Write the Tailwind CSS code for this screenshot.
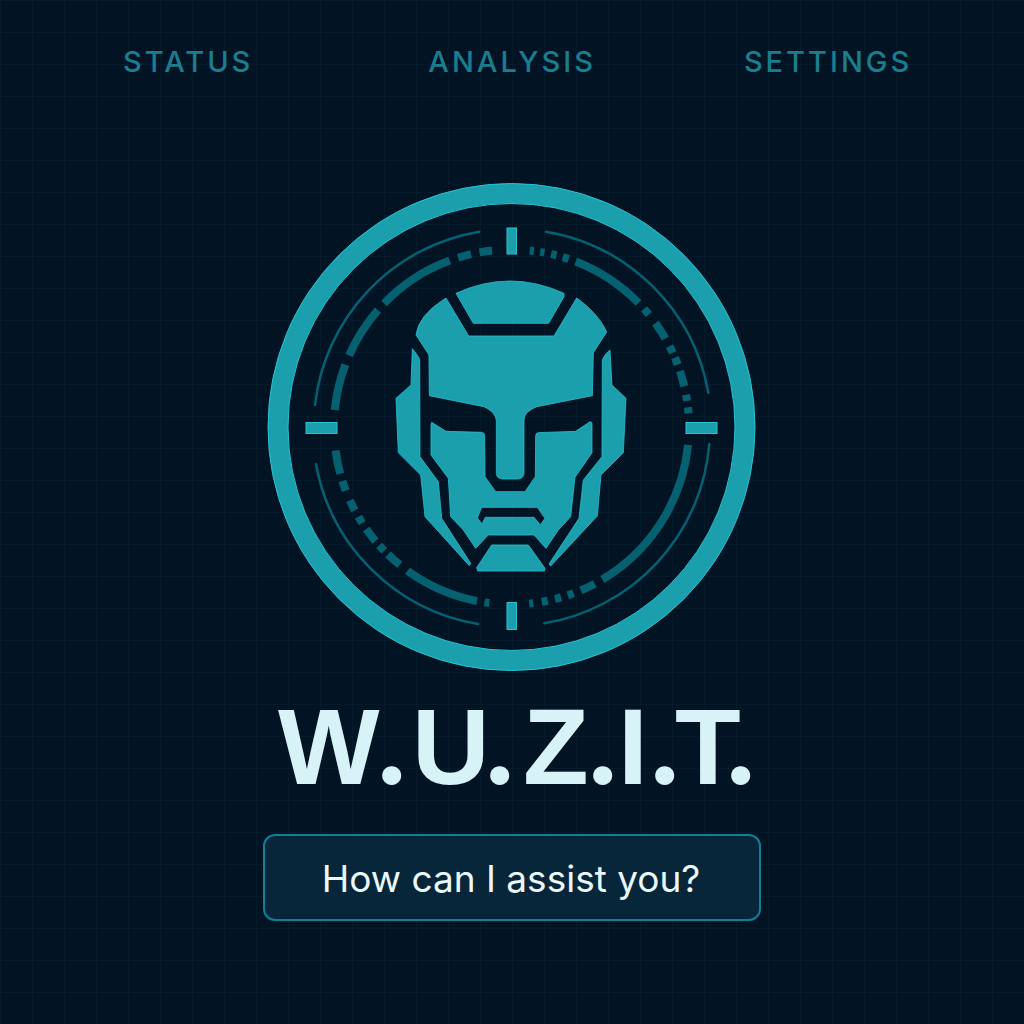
<!DOCTYPE html>
<html lang="en">

<head>
    <meta charset="UTF-8" />
    <title>W.U.Z.I.T.</title>
    <script src="https://cdn.jsdelivr.net/npm/@tailwindcss/browser@4"></script>
</head>

<body class="bg-[#021424] min-h-screen">
    <main class="h-[1024px] overflow-hidden font-['Inter',sans-serif] bg-[linear-gradient(rgba(30,90,120,0.08)_1px,transparent_1px),linear-gradient(90deg,rgba(30,90,120,0.08)_1px,transparent_1px)] bg-[size:32px_32px]">
        <!-- Navbar -->
        <nav class="flex pt-[45px] h-[178px] text-[29px] leading-[34px] tracking-[3px] font-medium text-[#1b7d8e]">
            <a href="#" class="ml-[123px]">STATUS</a>
            <a href="#" class="ml-[175px]">ANALYSIS</a>
            <a href="#" class="ml-[148px]">SETTINGS</a>
        </nav>

        <!-- Logo -->
        <svg class="block mx-auto" width="500" height="500" viewBox="262 178 500 500" fill="none">
            <circle cx="511.5" cy="427" r="233.5" stroke="#1c9fad" stroke-width="20" />
            <circle cx="511.5" cy="427" r="243.5" stroke="#27c3d2" />
            <circle cx="511.5" cy="427" r="223.5" stroke="#27c3d2" />

            <!-- thin arcs -->
            <g stroke="#05606f" stroke-width="2.5" stroke-linecap="round">
                <path d="M315 405A198 198 0 0 1 479.3 231.7" />
                <path d="M546 231.7A198 198 0 0 1 708.3 392.7" />
                <path d="M709.3 444A198 198 0 0 1 544.3 623.3" />
                <path d="M478.3 624A198 198 0 0 1 316 464.3" />
            </g>

            <!-- segmented ring, dash lengths in degrees from 3 o'clock -->
            <circle cx="511.5" cy="427" r="177.5" stroke="#05606f" stroke-width="8" pathLength="360"
                stroke-dasharray="0 5.8 53.4 2.8 5 2.5 2 2.3 2 2.4 2 2.7 1.4 12.9 1.6 2.4 24.7 3.1 5.1 1.7 2.4 1.8 4.9 2.3 2.4 2.4 3.6 3.4 3.3 2.4 7.7 13.1 15.1 3.2 17.4 2.9 25.5 2.9 4.3 2.8 4.1 12.2 1.4 2 1.4 2.2 1.8 2.1 2 2.4 24.5 2.6 2.4 3.5 5.9 2.8 2.4 1.7 2.4 2.2 5.1 2.8 2 2.1 2 4.4" />

            <!-- ticks -->
            <g fill="#1c9fad" stroke="#27c3d2">
                <rect x="507" y="228" width="9.5" height="26" />
                <rect x="507" y="602.5" width="9.5" height="27" />
                <rect x="306" y="422.5" width="31" height="11" />
                <rect x="686" y="422.5" width="31" height="11" />
            </g>

            <!-- face, points read off a 3x crop -->
            <g transform="translate(380 270) scale(0.33333)" fill="#1c9fad" stroke="#25bccb" stroke-width="2.5" stroke-linejoin="round">
                <path d="M228 70Q390 -4 552 70L552 80L506 160L280 160Z" />
                <path d="M198 84L266 198L522 198L590 84C630 112 665 150 680 186L640 248L637 377L470 410Q432 425 432 450L432 610Q430 627 412 627L370 627Q350 627 349 610L349 450Q345 425 312 410L148 377L147 255L108 195Q115 135 198 84Z" />
                <path fill-rule="evenodd" d="M155 457L198 484L305 487Q314 489 314 497L315 620L347 665L435 665L466 620L467 497Q468 488 475 488L587 484L630 455Q636 455 636 462L636 548L585 622L572 740L535 780L498 835L462 795L325 795L287 835L250 780L212 740L205 625L153 555L153 465ZM305 712L472 712L495 745L481 765L462 742L316 742L306 762L292 744Z" />
                <path d="M335 825L445 825L495 895L493 903L293 903L290 893Z" />
                <path d="M97 236Q117 260 119 270L120 560L175 635L185 745L272 880L268 887L135 740L122 615L55 548L48 385L93 345Z" />
                <path d="M690 240L696 345L738 385L730 548L663 615L652 738L512 888L507 882L597 745L610 630L666 560L667 270Q675 250 690 240Z" />
            </g>
        </svg>

        <!-- Title: round stops come from Inter, capitals from Liberation Sans, each cell sized to the tight kerning -->
        <h1 class="mt-[21px] ml-[278px] flex items-baseline h-[88px] font-['Liberation_Sans',sans-serif] text-[107.5px] leading-[88px] font-bold text-[#d8f3f8]">
            <span class="w-[95px] shrink-0">W</span>
            <span class="w-[39px] shrink-0 font-['Inter',sans-serif] text-[112px]">.</span>
            <span class="w-[69px] shrink-0">U</span>
            <span class="w-[42px] shrink-0 font-['Inter',sans-serif] text-[112px]">.</span>
            <span class="w-[61px] shrink-0">Z</span>
            <span class="w-[34px] shrink-0 font-['Inter',sans-serif] text-[112px]">.</span>
            <span class="w-[28px] shrink-0">I</span>
            <span class="w-[29px] shrink-0 font-['Inter',sans-serif] text-[112px]">.</span>
            <span class="w-[47px] shrink-0">T</span>
            <span class="font-['Inter',sans-serif] text-[112px]">.</span>
        </h1>

        <!-- Prompt -->
        <div class="mt-[47px] ml-[263px] w-[498px] h-[87px] flex items-center justify-center pt-[2px] pr-[2px] rounded-xl border-2 border-[#0f7f97] bg-[#08263a] text-[37px] text-[#eaf8fb]">
            How can I assist you?
        </div>
    </main>
</body>

</html>
